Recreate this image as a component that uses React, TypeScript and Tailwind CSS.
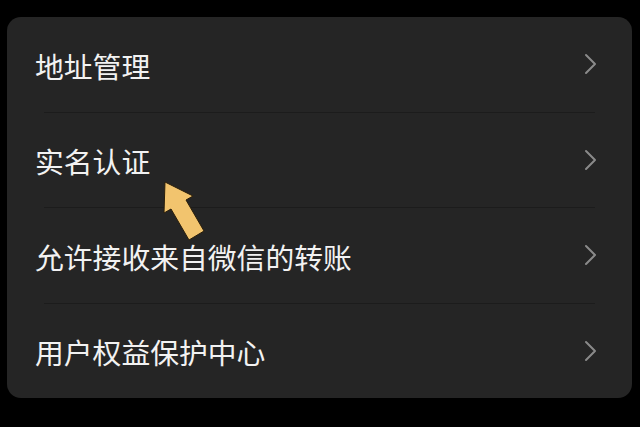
import React from 'react';

const items = ['地址管理', '实名认证', '允许接收来自微信的转账', '用户权益保护中心'];

const Chevron: React.FC = () => (
  <svg width="14" height="22" viewBox="0 0 14 22" fill="none" className="shrink-0">
    <path d="M2 2l9 9-9 9" stroke="#8a8a8a" strokeWidth={2} strokeLinecap="round" strokeLinejoin="round" />
  </svg>
);

const App: React.FC = () => {
  return (
    <div className="relative h-[427px] w-[640px] overflow-hidden bg-black pl-[7px] pt-[17px] font-['Noto_Sans_CJK_SC','Noto_Sans',sans-serif]">
      <div className="flex h-[381px] w-[625px] flex-col rounded-[14px] bg-[#252525]">
        {items.map((label, i) => (
          <React.Fragment key={label}>
            {i > 0 && <div className="ml-[37px] mr-[37px] h-px bg-[#1c1c1c]" />}
            <div className="flex h-[95px] items-center justify-between pl-[28px] pr-[34px]">
              <span className="pt-[4px] text-[28.8px] leading-none text-[#f2f2f2]">{label}</span>
              <Chevron />
            </div>
          </React.Fragment>
        ))}
      </div>

      {/* highlight arrow */}
      <svg className="absolute left-0 top-0" width="640" height="427" viewBox="0 0 640 427">
        <path
          d="M165 182 L193 196 L186 200 L204 231 L189 240 L171 209 L164 213 Z"
          fill="#f2c46e"
          stroke="#2a1e0a"
          strokeWidth={1}
          strokeLinejoin="round"
        />
      </svg>
    </div>
  );
};

export default App;
